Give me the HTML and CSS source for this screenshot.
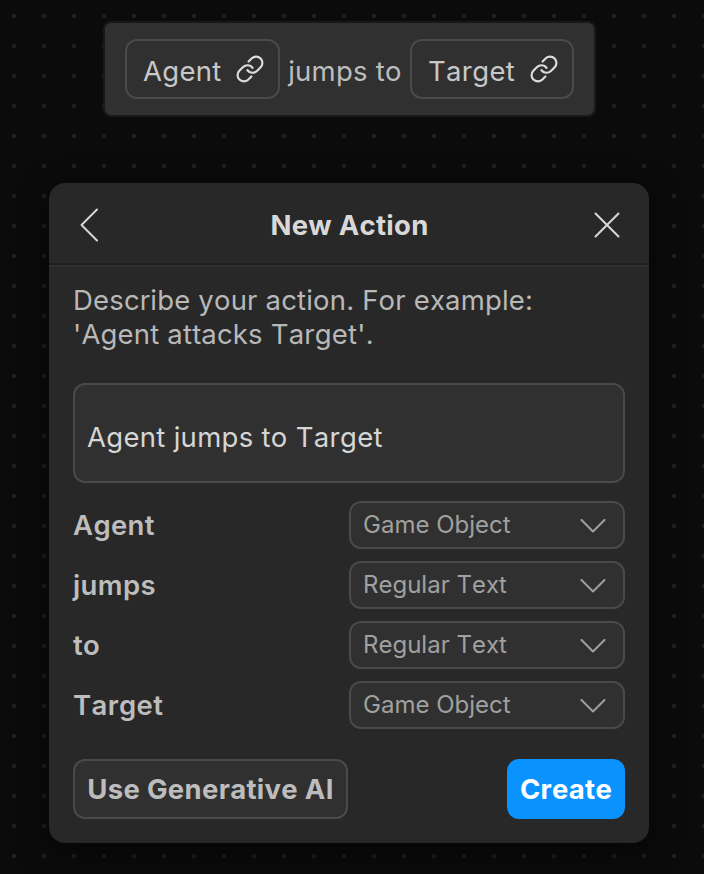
FILE: index.html
```html
<!DOCTYPE html>
<html lang="en">
<head>
<meta charset="utf-8">
<title>New Action</title>
<link rel="stylesheet" href="styles.css">
</head>
<body>
<svg class="defs" width="0" height="0" aria-hidden="true">
  <symbol id="link" viewBox="0 0 24 24">
    <path d="M10 13a5 5 0 0 0 7.54.54l3-3a5 5 0 0 0-7.07-7.07l-2.6 2.6"/>
    <path d="M14 11a5 5 0 0 0-7.54-.54l-3 3a5 5 0 0 0 7.07 7.07l2.6-2.6"/>
  </symbol>
  <symbol id="chevron" viewBox="0 0 26 14"><path d="M1.5 1 L13 12.5 L24.5 1"/></symbol>
</svg>
<main class="canvas">
  <section class="sentence">
    <div class="chip"><span>Agent</span><svg class="link"><use href="#link"/></svg></div>
    <span class="words">jumps to</span>
    <div class="chip"><span>Target</span><svg class="link"><use href="#link"/></svg></div>
  </section>
  <section class="panel">
    <header class="header">
      <svg class="back" viewBox="0 0 20 34"><path d="M18 1.5 L2.5 17 L18 32.5"/></svg>
      <h1>New Action</h1>
      <svg class="close" viewBox="0 0 26 26"><path d="M1.5 1.5 L24.5 24.5 M24.5 1.5 L1.5 24.5"/></svg>
    </header>
    <div class="body">
      <p class="hint">Describe your action. For example:<br>'Agent attacks Target'.</p>
      <div class="field">Agent jumps to Target</div>
      <div class="rows">
        <div class="row"><span class="label">Agent</span><div class="select"><span>Game Object</span><svg class="chevron"><use href="#chevron"/></svg></div></div>
        <div class="row"><span class="label">jumps</span><div class="select"><span>Regular Text</span><svg class="chevron"><use href="#chevron"/></svg></div></div>
        <div class="row"><span class="label">to</span><div class="select"><span>Regular Text</span><svg class="chevron"><use href="#chevron"/></svg></div></div>
        <div class="row"><span class="label">Target</span><div class="select"><span>Game Object</span><svg class="chevron"><use href="#chevron"/></svg></div></div>
      </div>
      <footer class="actions">
        <button class="ai">Use Generative AI</button>
        <button class="create">Create</button>
      </footer>
    </div>
  </section>
</main>
</body>
</html>
```
FILE: styles.css
```css
* { box-sizing: border-box; }
body {
  margin: 0;
  background: #0b0b0b;
  color: #bdbdbd;
  font: 400 27.5px/34px Inter, sans-serif;
  font-kerning: none;
  letter-spacing: 0.27px;
}
.defs { position: absolute; }
svg { fill: none; stroke: currentColor; stroke-width: 2; stroke-linecap: round; stroke-linejoin: round; flex: none; }
.canvas {
  height: 874px;
  padding-top: 21px;
  overflow: hidden;
  background: conic-gradient(from 90deg at 26px 26px, #1e1e1e 90deg, #0b0b0b 0) 16px 18px / 30px 30px;
}
.sentence {
  width: 493px;
  height: 96px;
  margin-left: 103px;
  padding: 16px 20px;
  display: flex;
  justify-content: space-between;
  align-items: center;
  background: #303030;
  border: 2px solid #191919;
  border-radius: 8px;
}
.chip {
  width: 155px;
  height: 60px;
  padding: 0 13px 0 16px;
  display: flex;
  align-items: center;
  justify-content: space-between;
  border: 2px solid #4a4a4a;
  border-radius: 12px;
  color: #c8c8c8;
}
.chip:last-child { width: 164px; }
.chip span, .words { padding-top: 4px; }
.link { width: 30px; height: 30px; color: #dcdcdc; stroke-width: 1.75; }
.panel {
  width: 600px;
  height: 660px;
  margin: 66px 0 0 49px;
  border-radius: 16px;
  background: #282828;
  box-shadow: 0 8px 32px rgba(0, 0, 0, 0.6);
}
.header {
  height: 82px;
  padding: 4px 29px 0 30px;
  display: flex;
  justify-content: space-between;
  align-items: center;
  border-bottom: 2px solid #1f1f1f;
  color: #d8d8d8;
}
.header h1 { margin: 0 0 0 6px; font-size: 27.5px; font-weight: 700; }
.back { width: 20px; height: 34px; }
.close { width: 26px; height: 26px; }
.body { padding: 16px 24px 0; border-top: 2px solid #303030; }
.hint { margin: 0; color: #b8b8b8; letter-spacing: 0.18px; }
.field {
  height: 100px;
  margin-top: 32px;
  padding: 35px 12px 0;
  border: 2px solid #4a4a4a;
  border-radius: 12px;
  background: #303030;
  color: #d6d6d6;
  letter-spacing: 0.3px;
}
.rows { margin-top: 18px; display: grid; gap: 12px; }
.row { display: flex; justify-content: space-between; align-items: center; }
.label { font-weight: 600; letter-spacing: 0.38px; }
.select {
  width: 276px;
  height: 48px;
  padding: 0 17px 0 12px;
  display: flex;
  justify-content: space-between;
  align-items: center;
  border: 2px solid #4a4a4a;
  border-radius: 12px;
  background: #303030;
  color: #a0a0a0;
  font-size: 24px;
  letter-spacing: 0;
}
.chevron { width: 26px; height: 14px; margin-top: 2px; }
.actions { margin-top: 30px; display: flex; justify-content: space-between; }
button {
  height: 60px;
  padding: 0;
  border: 0;
  border-radius: 12px;
  font: 700 27.5px/34px Inter, sans-serif;
  font-kerning: none;
  letter-spacing: 0.3px;
}
.ai { width: 275px; border: 2px solid #4a4a4a; background: #303030; color: #bdbdbd; }
.create { width: 118px; background: #0a93ff; color: #fff; }
```
